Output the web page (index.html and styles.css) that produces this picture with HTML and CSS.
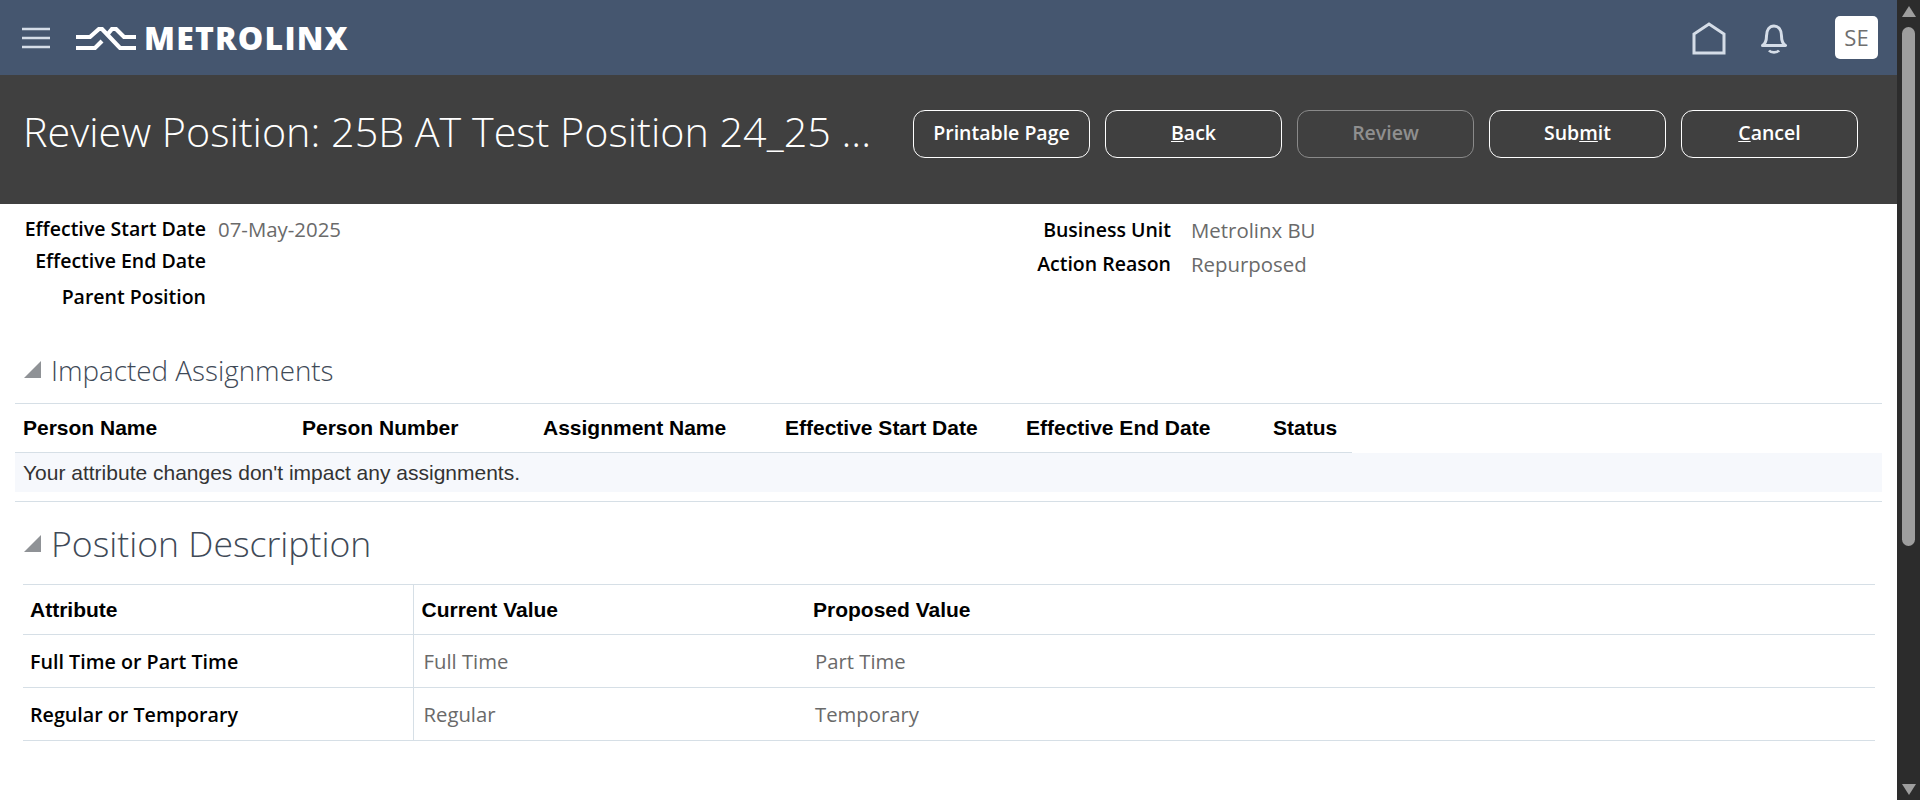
FILE: index.html
```html
<!DOCTYPE html>
<html>
<head>
<meta charset="utf-8" />
<title>Review Position</title>
<link rel="stylesheet" href="styles.css">
</head>
<body>
<div class="page">
	<div class="main">
		<div class="topbar">
			<svg class="burger" width="28" height="22" viewBox="0 0 28 22"><path d="M0 2h28M0 11h28M0 20h28" stroke="#d5dde8" stroke-width="2.4" fill="none"/></svg>
			<svg class="mark" width="60" height="24" viewBox="0 0 60 24"><path d="M0 10H14L23 2H26L44 21H60M0 21H19L26 14M31 8 36 2H40L48 10H60" stroke="#fff" stroke-width="4.2" fill="none"/></svg>
			<span class="logo">METROLINX</span>
			<svg class="home" width="34" height="33" viewBox="0 0 34 33"><path d="M2 31V12L17 2l15 10v19z" stroke="#d5dde8" stroke-width="3" fill="none"/></svg>
			<svg class="bell" width="28" height="31" viewBox="0 0 28 31"><path d="M2.500 22.500c3-2 4-4 4-9.500 0-6 3-10 7.500-10s7.500 4 7.500 10c0 5.500 1 7.500 4 9.500z" stroke="#d5dde8" stroke-width="3" stroke-linejoin="round" fill="none"/><path d="M9 27.500c2 2.500 8 2.500 10 0" stroke="#d5dde8" stroke-width="2.600" fill="none"/></svg>
			<div class="avatar">SE</div>
		</div>
		<div class="titlebar">
			<h1>Review Position: 25B AT Test Position 24_25 ...</h1>
			<div class="btns">
				<a class="btn">Printable Page</a>
				<a class="btn"><u>B</u>ack</a>
				<a class="btn off">Review</a>
				<a class="btn">Sub<u>m</u>it</a>
				<a class="btn"><u>C</u>ancel</a>
			</div>
		</div>
		<div class="info">
			<div class="col col1">
				<div class="row r1"><label>Effective Start Date</label><span>07-May-2025</span></div>
				<div class="row r2"><label>Effective End Date</label></div>
				<div class="row r3"><label>Parent Position</label></div>
			</div>
			<div class="col col2">
				<div class="row r4"><label>Business Unit</label><span>Metrolinx BU</span></div>
				<div class="row r5"><label>Action Reason</label><span>Repurposed</span></div>
			</div>
		</div>
		<div class="sec sec1">
			<div class="tri"></div>
			<h2>Impacted Assignments</h2>
		</div>
		<div class="wrap1">
			<table class="t1">
				<tr>
					<th class="c1">Person Name</th>
					<th class="c2">Person Number</th>
					<th class="c3">Assignment Name</th>
					<th class="c4">Effective Start Date</th>
					<th class="c5">Effective End Date</th>
					<th class="c6">Status</th>
				</tr>
			</table>
			<div class="empty">Your attribute changes don't impact any assignments.</div>
		</div>
		<div class="sec sec2">
			<div class="tri"></div>
			<h2>Position Description</h2>
		</div>
		<table class="t2">
			<tr class="head"><th class="a1">Attribute</th><th class="a2">Current Value</th><th>Proposed Value</th></tr>
			<tr><td class="a1">Full Time or Part Time</td><td class="a2 val">Full Time</td><td class="val">Part Time</td></tr>
			<tr><td class="a1">Regular or Temporary</td><td class="a2 val">Regular</td><td class="val">Temporary</td></tr>
		</table>
	</div>
	<div class="sbar">
		<div class="arrow up"></div>
		<div class="thumb"></div>
		<div class="arrow down"></div>
	</div>
</div>
</body>
</html>
```

FILE: styles.css
```css
*{margin:0;padding:0;box-sizing:border-box;}
body{overflow:hidden;font-family:"Open Sans","Noto Sans",sans-serif;background:#fff;}
.page{display:flex;width:1920px;height:800px;}
.main{width:1897px;flex:none;}

.topbar{height:75px;background:#45566f;display:flex;align-items:center;padding-left:22px;}
.burger{margin-right:26px;margin-top:1px;}
.mark{margin-right:8px;margin-top:2px;}
.logo{color:#fff;font-weight:800;font-size:32px;letter-spacing:1.2px;line-height:75px;white-space:nowrap;}
.home{margin-left:auto;margin-right:34px;margin-top:2px;}
.bell{margin-right:47px;margin-top:2px;}
.avatar{width:43px;height:43px;background:#fff;border-radius:5px;color:#6f6f6f;font-size:22px;line-height:43px;text-align:center;margin-right:19px;}

.titlebar{height:129px;background:#404040;display:flex;padding:33px 39px 0 23px;}
.titlebar h1{color:#fff;font-weight:300;font-size:41.3px;line-height:46px;width:890px;white-space:nowrap;}
.btns{display:flex;gap:15px;margin-top:2px;}
.btn{width:177px;height:48px;border:1.5px solid #fff;border-radius:12px;color:#fff;font-weight:600;font-size:19.5px;line-height:43px;text-align:center;}
.btn.off{border-color:#8a8a8a;color:#8f8f8f;}

.info{display:flex;height:138px;font-size:19.5px;}
.col1{width:1000px;}
.row{display:flex;line-height:26px;}
.row label{color:#000;font-weight:600;text-align:right;white-space:nowrap;}
.row span{color:#6a6a6a;font-size:20.4px;white-space:nowrap;}
.col1 label{width:206px;}
.col1 span{margin-left:12px;}
.col2 label{width:171px;}
.col2 span{margin-left:20px;}
.r1{margin-top:12px;}
.r2{margin-top:6px;}
.r3{margin-top:10px;}
.r4{margin-top:13px;}
.r5{margin-top:8px;}

.sec{display:flex;align-items:center;}
.tri{width:0;height:0;border-style:solid;border-width:0 0 17px 17px;border-color:transparent transparent #8f9296 transparent;}
.sec h2{font-weight:300;color:#3f4a57;white-space:nowrap;}
.sec1{height:61px;padding:0 0 6px 24px;}
.sec1 h2{font-size:27.8px;margin-left:10px;}
.sec2{height:82px;padding-left:24px;}
.sec2 h2{font-size:35.6px;margin-left:10px;}

table{border-collapse:collapse;font-family:"Liberation Sans",Arial,sans-serif;}
th{text-align:left;font-weight:700;color:#000;}
.wrap1{margin-left:15px;width:1867px;border-top:1px solid #d6dfe6;border-bottom:1px solid #d6dfe6;height:99px;}
.t1{width:1337px;table-layout:fixed;}
.t1 th{height:48px;font-size:21px;padding-left:8px;border-bottom:1px solid #d6dfe6;white-space:nowrap;}
.c1{width:279px;}
.c2{width:241px;}
.c3{width:242px;}
.c4{width:241px;}
.c5{width:247px;}
.empty{height:39px;background:#f6f8fc;font-family:"Liberation Sans",Arial,sans-serif;font-size:21px;line-height:39px;color:#333;padding-left:8px;}

.t2{margin-left:23px;width:1852px;table-layout:fixed;border-top:1px solid #d6dfe6;}
.t2 th,.t2 td{border-bottom:1px solid #d6dfe6;padding-left:8px;font-size:21px;}
.t2 th.a1,.t2 td.a1{padding-left:7px;}
.t2 .head th{height:50px;}
.t2 td{height:53px;font-family:"Open Sans",sans-serif;font-weight:600;color:#000;font-size:19.7px;}
.t2 td.val{color:#6a6a6a;font-weight:400;font-size:20.3px;padding-left:10px;}
.a1{width:390px;border-right:1px solid #d6dfe6;}
.a2{width:392px;}

.sbar{width:23px;flex:none;background:#2c2c2c;display:flex;flex-direction:column;align-items:center;padding:6px 0 5px;}
.arrow{width:0;height:0;border-style:solid;flex:none;}
.up{border-width:0 7.500px 11px 7.500px;border-color:transparent transparent #9e9e9e transparent;}
.down{border-width:11px 7.500px 0 7.500px;border-color:#9e9e9e transparent transparent transparent;margin-top:auto;}
.thumb{width:13px;height:519px;background:#9e9e9e;border-radius:6.500px;margin-top:10px;flex:none;}
```
